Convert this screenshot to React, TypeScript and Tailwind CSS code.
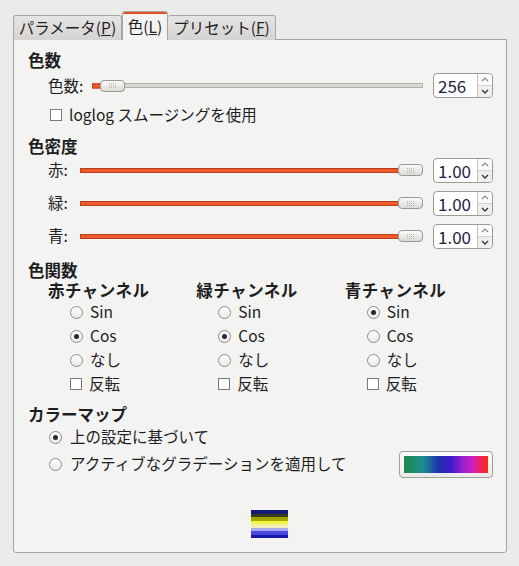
import React from 'react';

const FONT = { fontFamily: '"Noto Sans CJK JP", "Noto Sans", sans-serif' };

function Thumb() {
  return (
    <div className="relative flex h-[12px] w-[25px] items-center justify-center rounded-[4px] border border-[#9a9894] bg-gradient-to-b from-[#fbfbfa] to-[#dcdad7]">
      <svg width="9" height="7" viewBox="0 0 9 7">
        {[0, 1, 2].map(r =>
          [0, 1, 2, 3].map(c => (
            <rect key={`${r}-${c}`} x={c * 2 + 1} y={r * 2 + 1} width="1" height="1" fill="#b5b3b0" />
          ))
        )}
      </svg>
    </div>
  );
}

function Spin({ value }: { value: string }) {
  return (
    <div className="flex h-[25px] w-[60px] overflow-hidden rounded-[4px] border border-[#9c9a97] bg-white">
      <div className="flex flex-1 items-center pl-[4px] text-[17px] leading-none text-[#1e2340]">{value}</div>
      <div className="flex w-[15px] flex-col border-l border-[#c4c2bf]">
        <div className="flex flex-1 items-center justify-center bg-[#fafafa]">
          <svg width="8" height="5" viewBox="0 0 8 5">
            <path d="M1 4 L4 1 L7 4" fill="none" stroke="#8a8a8a" strokeWidth="1.2" />
          </svg>
        </div>
        <div className="flex flex-1 items-center justify-center border-t border-[#d6d4d1] bg-[#f0efed]">
          <svg width="8" height="5" viewBox="0 0 8 5">
            <path d="M1 1 L4 4 L7 1" fill="none" stroke="#333" strokeWidth="1.3" />
          </svg>
        </div>
      </div>
    </div>
  );
}

function Radio({ on }: { on?: boolean }) {
  return (
    <span className="flex h-[13px] w-[13px] shrink-0 items-center justify-center rounded-full border border-[#8c8a87] bg-gradient-to-b from-white to-[#ecebea]">
      {on && <span className="h-[5px] w-[5px] rounded-full bg-[#2a2a2a]" />}
    </span>
  );
}

function Check() {
  return <span className="h-[12px] w-[12px] shrink-0 border border-[#7a7875] bg-white" />;
}

function DensityRow({ label }: { label: string }) {
  return (
    <div className="flex h-[24px] items-center">
      <span className="w-[32px] pl-[20px] text-[15.5px] box-content">{label}</span>
      <div className="relative flex flex-1 items-center">
        <div className="h-[5px] flex-1 border border-[#b8401e] bg-[#ef5a2d]" />
        <div className="absolute right-0 top-1/2 -translate-y-1/2">
          <Thumb />
        </div>
      </div>
      <div className="ml-[10px]">
        <Spin value="1.00" />
      </div>
    </div>
  );
}

function Channel({ title, sel }: { title: string; sel: number }) {
  const items = ['Sin', 'Cos', 'なし'];
  return (
    <div className="flex w-[152px] flex-col">
      <div className="flex h-5 items-center text-[16.5px] font-bold tracking-[0.5px]">{title}</div>
      {items.map((t, i) => (
        <div key={t} className="flex h-6 items-center gap-[7px] pl-[22px]">
          <Radio on={i === sel} />
          <span className="text-[15.5px]">{t}</span>
        </div>
      ))}
      <div className="flex h-6 items-center gap-[7px] pl-[22px]">
        <Check />
        <span className="text-[15.5px]">反転</span>
      </div>
    </div>
  );
}

export default function App() {
  return (
    <div className="h-[566px] w-[519px] bg-[#ebebea] pl-[13px] pt-[11px] text-[#1e1e1e]" style={FONT}>
      {/* tabs */}
      <div className="relative z-10 flex h-[29px] items-end">
        <div className="flex h-[25px] w-[109px] items-center justify-center rounded-t-[3px] border border-b-0 border-[#a8a6a3] bg-gradient-to-b from-[#e6e5e3] to-[#d5d4d2] text-[15.5px]">
          パラメータ(<span className="underline">P</span>)
        </div>
        <div className="flex h-[29px] w-[46px] flex-col rounded-t-[3px] border border-b-0 border-[#a8a6a3] bg-[#f3f3f2]">
          <div className="h-[2px] rounded-t-[2px] bg-[#e2502a]" />
          <div className="flex flex-1 items-center justify-center pb-[1px] text-[15.5px]">
            色(<span className="underline">L</span>)
          </div>
        </div>
        <div className="flex h-[25px] w-[108px] items-center justify-center rounded-t-[3px] border border-b-0 border-l-0 border-[#a8a6a3] bg-gradient-to-b from-[#e6e5e3] to-[#d5d4d2] text-[15.5px]">
          プリセット(<span className="underline">F</span>)
        </div>
      </div>

      {/* panel */}
      <div className="-mt-px flex h-[514px] w-[494px] flex-col rounded-b-[3px] border border-[#a8a6a3] bg-[#f3f3f2] pl-[14px] pr-[13px] pt-[10px]">
        <div className="flex h-5 items-center text-[16.5px] font-bold">色数</div>
        <div className="mt-[3px] flex h-[25px] items-center">
          <span className="w-[44px] pl-[20px] text-[15.5px] box-content">色数:</span>
          <div className="relative flex flex-1 items-center">
            <div className="h-[5px] flex-1 border border-[#b3afab] bg-[#d9d6d3]" />
            <div className="absolute left-0 top-1/2 h-[5px] w-[9px] -translate-y-1/2 border border-[#b8401e] bg-[#ef5a2d]" />
            <div className="absolute left-[8px] top-1/2 -translate-y-1/2">
              <Thumb />
            </div>
          </div>
          <div className="ml-[10px]">
            <Spin value="256" />
          </div>
        </div>
        <div className="mt-[7px] flex h-5 items-center gap-[7px] pl-[22px]">
          <Check />
          <span className="text-[15.5px]">loglog スムージングを使用</span>
        </div>

        <div className="mt-[11px] flex h-5 items-center text-[16.5px] font-bold">色密度</div>
        <div className="mt-[2px] flex flex-col gap-[9px]">
          <DensityRow label="赤:" />
          <DensityRow label="緑:" />
          <DensityRow label="青:" />
        </div>

        <div className="mt-[12px] flex h-5 items-center text-[16.5px] font-bold">色関数</div>
        <div className="flex pl-[20px]">
          <Channel title="赤チャンネル" sel={1} />
          <Channel title="緑チャンネル" sel={1} />
          <Channel title="青チャンネル" sel={0} />
        </div>

        <div className="mt-2 flex h-5 items-center text-[16.5px] font-bold">カラーマップ</div>
        <div className="mt-[2px] flex h-[22px] items-center gap-[8px] pl-[21px]">
          <Radio on />
          <span className="text-[15.5px]">上の設定に基づいて</span>
        </div>
        <div className="mt-[2px] flex h-[28px] items-center">
          <div className="flex flex-1 items-center gap-[8px] pl-[21px]">
            <Radio />
            <span className="text-[15.5px]">アクティブなグラデーションを適用して</span>
          </div>
          <div className="flex h-[27px] w-[94px] items-center justify-center rounded-[4px] border border-[#a09e9b] bg-gradient-to-b from-[#fdfdfd] to-[#eceae8]">
            <div className="h-[17px] w-[84px] bg-[linear-gradient(to_right,#208848,#1b9090_22%,#2030b0_42%,#3a1ac8_55%,#9a20d0_70%,#d020c0_82%,#f0206a_90%,#ff2a10)]" />
          </div>
        </div>

        <div className="ml-[223px] mt-[32px] flex h-[28px] w-[37px] flex-col">
          <div className="flex-1 bg-[#121a78]" />
          <div className="flex-1 bg-[#3a3a14]" />
          <div className="flex-1 bg-[#a4a400]" />
          <div className="flex-1 bg-[#f6f640]" />
          <div className="flex-1 bg-[#eeeeb0]" />
          <div className="flex-1 bg-[#a8a8f0]" />
          <div className="flex-1 bg-[#4848e0]" />
          <div className="flex-1 bg-[#1818a8]" />
        </div>
      </div>
    </div>
  );
}
